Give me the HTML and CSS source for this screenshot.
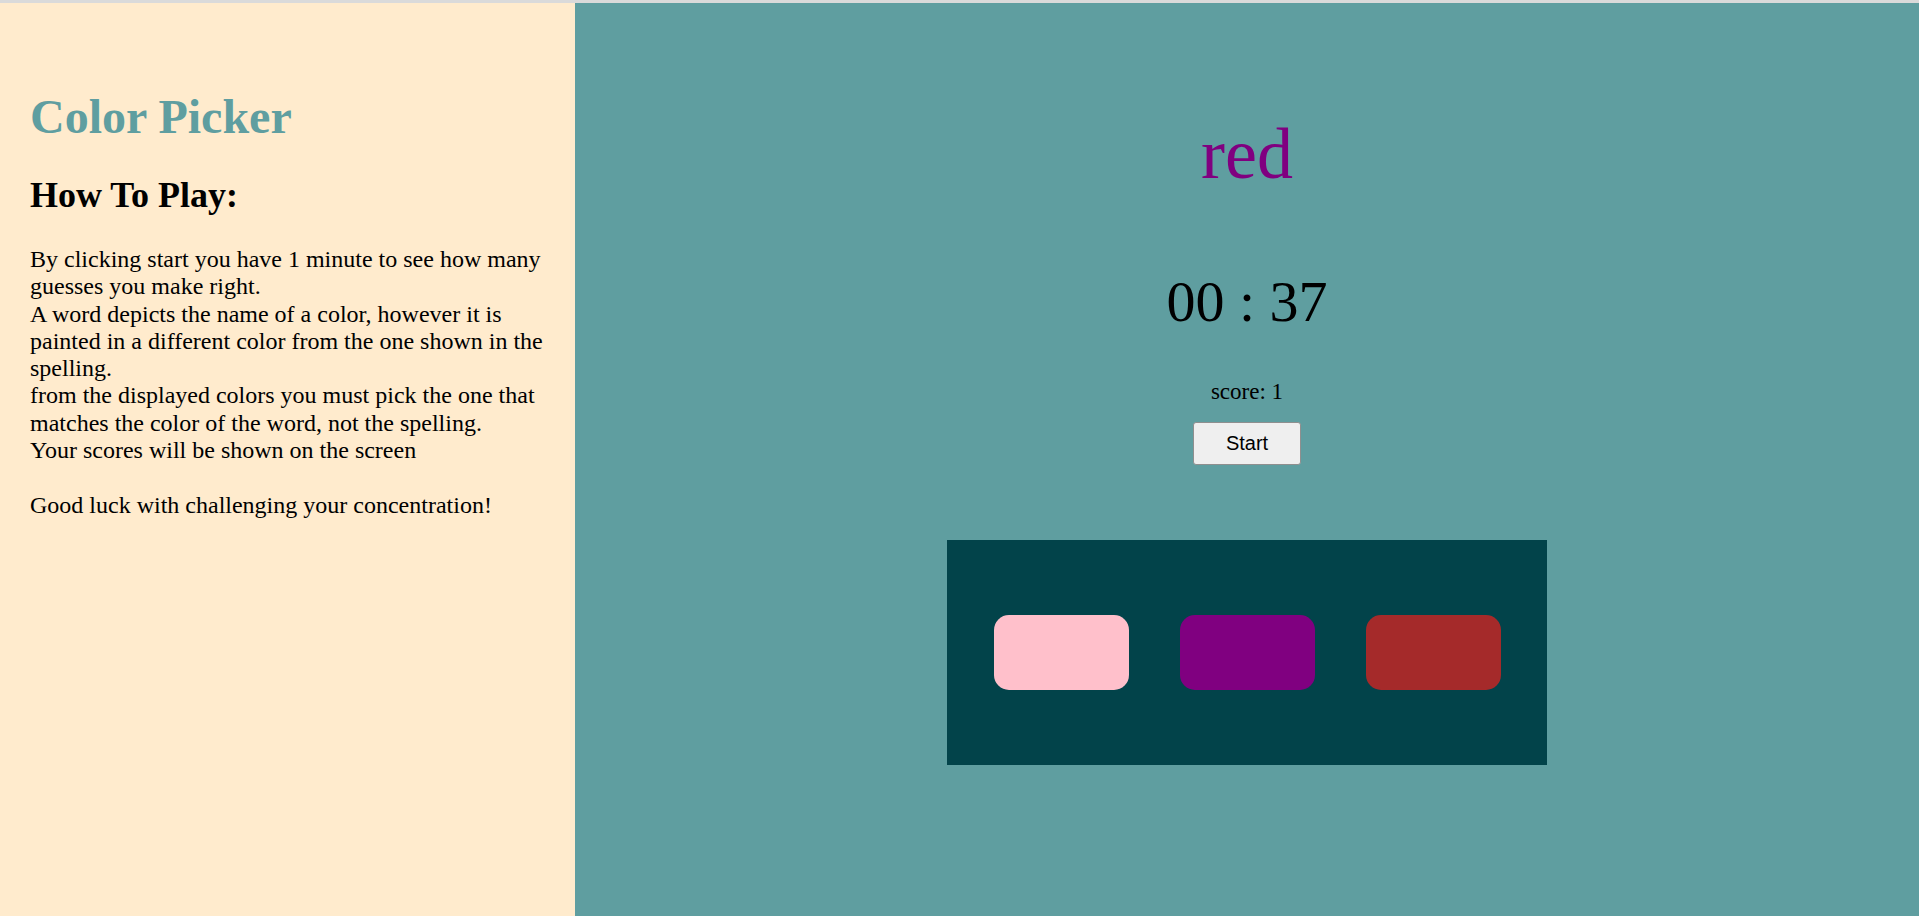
FILE: index.html
```html
<!DOCTYPE html>
<html lang="en">
<head>
<meta charset="utf-8">
<title>Color Picker</title>
<link rel="stylesheet" href="styles.css">
</head>
<body>
<div class="topline"></div>
<div class="page">
  <aside class="info">
    <h1 class="title">Color Picker</h1>
    <h2 class="subtitle">How To Play:</h2>
    <p class="rules">By clicking start you have 1 minute to see how many guesses you make right.<br>A word depicts the name of a color, however it is painted in a different color from the one shown in the spelling.<br>from the displayed colors you must pick the one that matches the color of the word, not the spelling.<br>Your scores will be shown on the screen<br><br>Good luck with challenging your concentration!</p>
  </aside>
  <main class="game">
    <div class="word">red</div>
    <div class="timer">00 : 37</div>
    <div class="score">score: 1</div>
    <button class="start">Start</button>
    <div class="board">
      <div class="swatch swatch-pink"></div>
      <div class="swatch swatch-purple"></div>
      <div class="swatch swatch-brown"></div>
    </div>
  </main>
</div>
</body>
</html>
```

FILE: styles.css
```css
html, body {
  margin: 0;
  padding: 0;
}
body {
  font-family: "Liberation Serif", "Times New Roman", serif;
  height: 916px;
  overflow: hidden;
  display: flex;
  flex-direction: column;
}
.topline {
  height: 3px;
  background: #dadada;
  flex: none;
}
.page {
  flex: 1;
  display: flex;
}
.info {
  width: 575px;
  flex: none;
  box-sizing: border-box;
  background: #ffebcd;
  padding: 86px 20px 0 30px;
  font-size: 24px;
  color: #000;
}
.title {
  margin: 0 0 31px;
  font-size: 48px;
  line-height: 55px;
  font-weight: bold;
  color: #5f9ea0;
}
.subtitle {
  margin: 0 0 30px;
  font-size: 36px;
  line-height: 41px;
  font-weight: bold;
}
.rules {
  margin: 0;
  font-size: 24px;
  line-height: 27.3px;
}
.game {
  flex: 1;
  background: #5f9ea0;
  display: flex;
  flex-direction: column;
  align-items: center;
  padding-top: 110px;
}
.word {
  font-size: 72px;
  line-height: 83px;
  color: #800080;
}
.timer {
  margin-top: 72px;
  font-size: 58px;
  line-height: 67px;
  color: #000;
}
.score {
  margin-top: 44px;
  font-size: 23px;
  line-height: 26px;
  color: #000;
}
.start {
  margin-top: 17px;
  width: 108px;
  height: 43px;
  box-sizing: border-box;
  padding: 0;
  font-family: "Liberation Sans", Arial, sans-serif;
  font-size: 20px;
  color: #000;
  background: #efefef;
  border: 1px solid #8f8f8f;
  border-radius: 3px;
}
.board {
  margin-top: 75px;
  width: 600px;
  height: 225px;
  box-sizing: border-box;
  padding: 0 46px 0 47px;
  background: #02434a;
  display: flex;
  align-items: center;
  justify-content: space-between;
}
.swatch {
  width: 135px;
  height: 75px;
  border-radius: 15px;
}
.swatch-pink { background: #ffc0cb; }
.swatch-purple { background: #800080; }
.swatch-brown { background: #a52a2a; }
```
